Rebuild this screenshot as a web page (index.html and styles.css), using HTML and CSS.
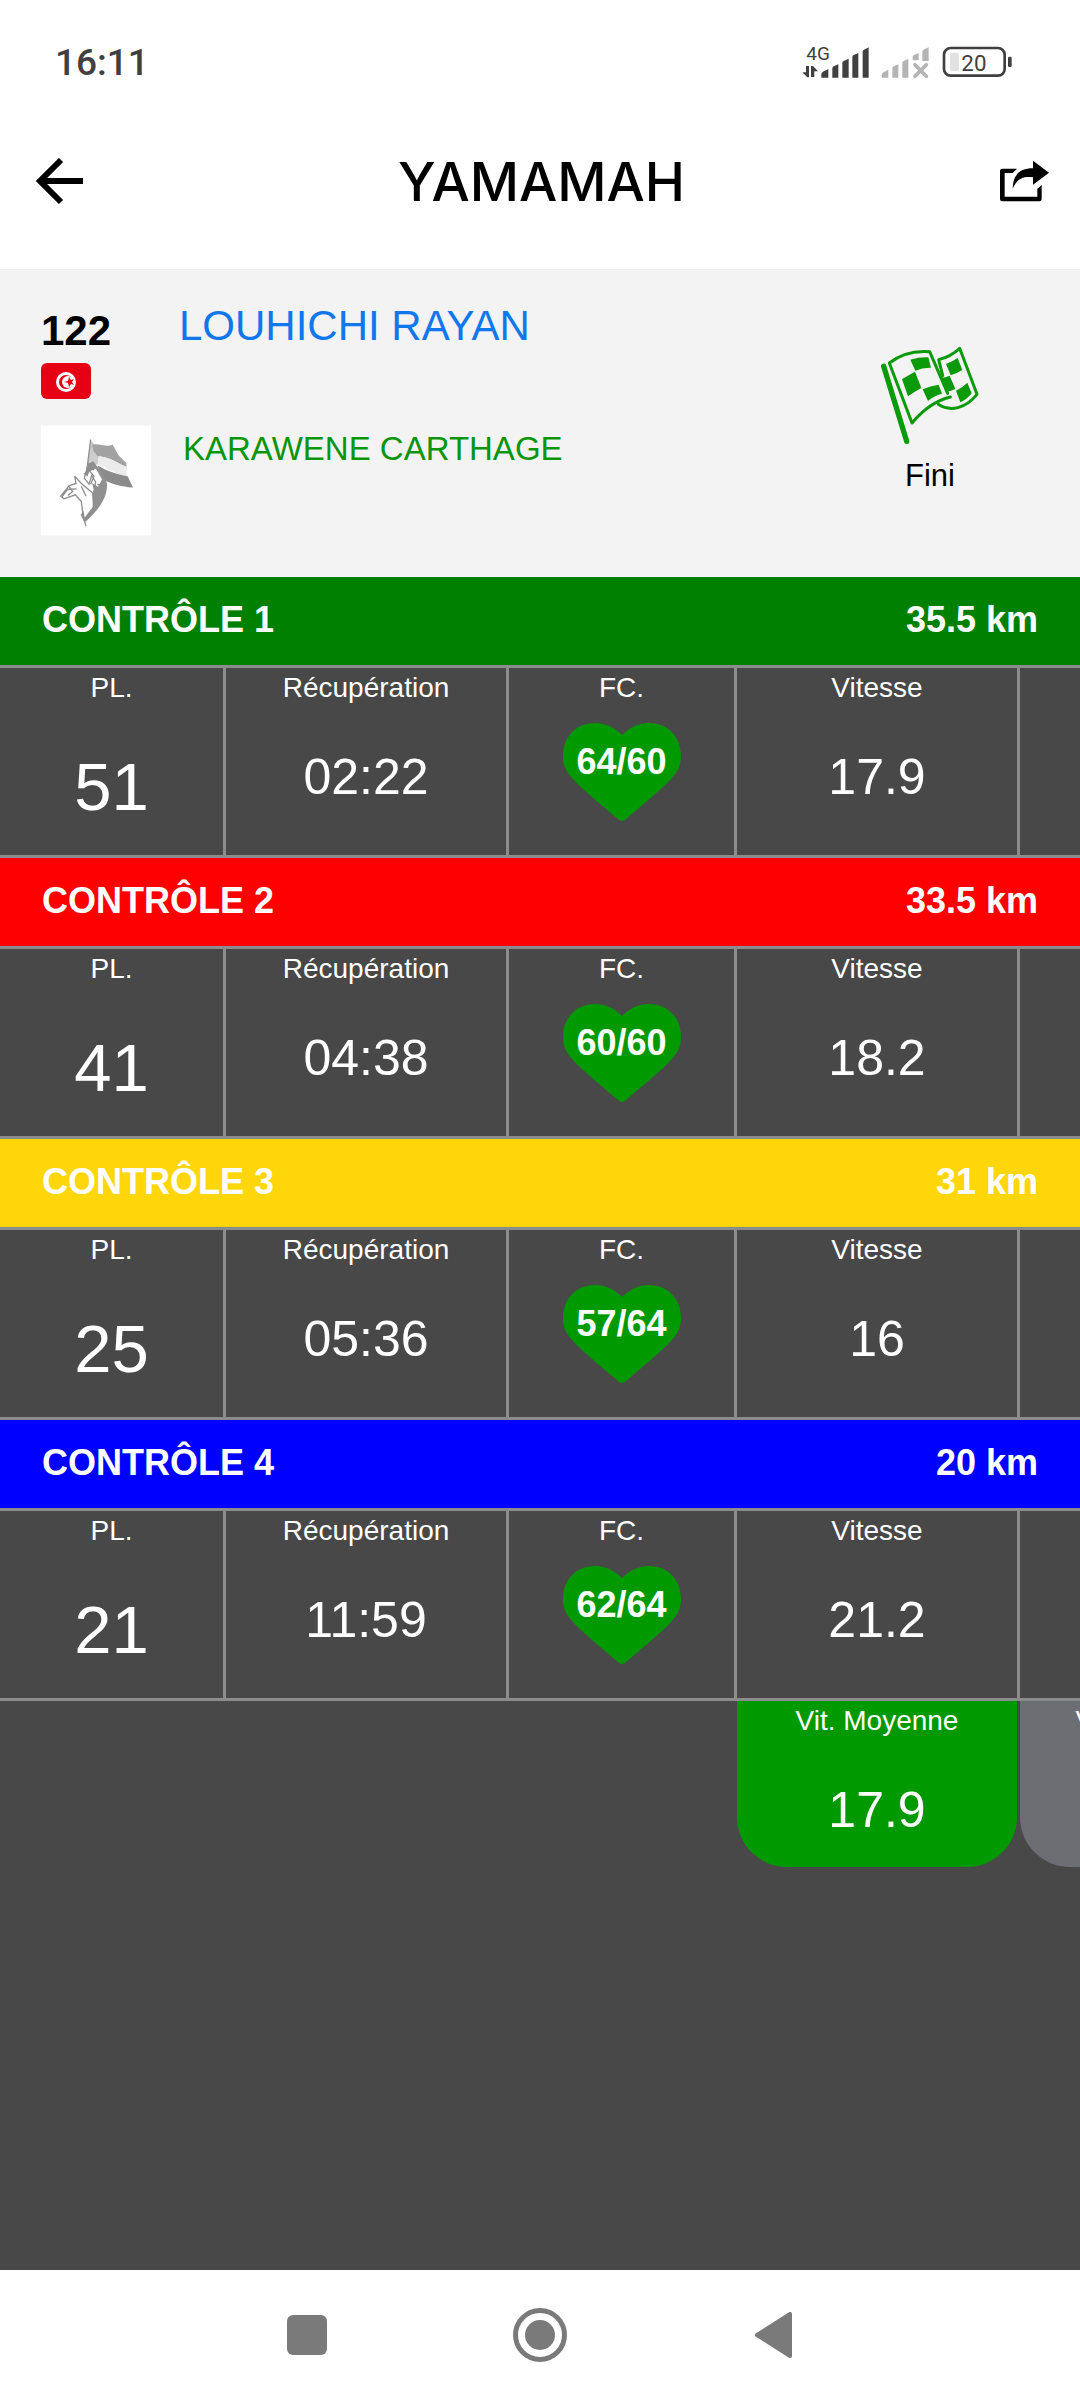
FILE: index.html
```html
<!DOCTYPE html>
<html lang="fr">
<head>
  <meta charset="UTF-8">
  <meta name="viewport" content="width=device-width, initial-scale=1.0">
  <title>YAMAMAH</title>
  <link rel="stylesheet" href="styles.css">
</head>
<body>
  <div class="status-bar">
    <span class="clock">16:11</span>
    <svg class="status-icons" viewBox="66 48 630 144">
      <g fill="#404040">
        <text x="79" y="114" font-size="57">4G</text>
        <path d="M78 132h9v34h-5l-15-15h11zM93 132h6l15 16h-11v17h-10z"/>
        <path d="M124 167v-10q0-5 5-8l16-8v26zM157 167v-28q0-4 4-6l14-6v40zM187 167v-44q0-4 4-6l15-7v57zM217 167v-62q0-4 4-6l14-6v74zM248 167v-78q0-4 4-6l14-7v91z"/>
        <rect x="492" y="78" width="182" height="83" rx="20" fill="none" stroke="#404040" stroke-width="8"/>
        <rect x="684" y="104" width="11" height="31" rx="4"/>
      </g>
      <path fill="#b4b4b4" d="M305 167v-8q0-5 5-8l15-8v24zM337 167v-28q0-4 4-6l14-6v40zM367 167v-44q0-4 4-6l14-7v57zM398 115v-10q0-4 4-6l14-6v22zM427 117v-28q0-4 4-6l15-7v41z"/>
      <path stroke="#b4b4b4" stroke-width="11" stroke-linecap="round" d="M405 128l34 35M439 128l-34 35"/>
      <rect x="510" y="92" width="27" height="55" rx="6" fill="#e2e2e2"/>
      <text x="544" y="147" font-size="67" fill="#404040">20</text>
    </svg>
  </div>

  <header class="app-bar">
    <button class="icon-button" aria-label="Retour">
      <svg width="48" height="48" viewBox="0 0 48 48" fill="none" stroke="#000" stroke-width="6">
        <path d="M25 3L4 24l21 21M4 24h43"/>
      </svg>
    </button>
    <h1>YAMAMAH</h1>
    <button class="icon-button" aria-label="Partager">
      <svg width="51" height="42" viewBox="658 418 153 126">
        <path d="M712 444h-44q-7 0-7 7v84q0 7 7 7h111q7 0 7-7v-42l-13 11v24h-98v-71h24z"/>
        <path d="M760 420l48 36-48 36v-22c-34-4-49 7-61 34 0-40 20-61 61-61z"/>
      </svg>
    </button>
  </header>

  <section class="profile">
    <div class="identity">
      <strong class="bib">122</strong>
      <svg class="country" viewBox="0 0 50 36">
        <rect width="50" height="36" rx="6" fill="#e70013"/>
        <circle cx="25" cy="19" r="10" fill="#fff"/>
        <circle cx="25" cy="19" r="7" fill="#e70013"/>
        <circle cx="27" cy="19" r="6" fill="#fff"/>
        <path fill="#e70013" d="M23 19l4-1 1-4 2 3 3-1-2 3 2 3-3-1-2 3-1-4z"/>
      </svg>
      <!-- horse and rider carrying a flag -->
      <svg class="horse" viewBox="33 228 330 330">
        <rect x="33" y="228" width="330" height="330" fill="#fff"/>
        <path fill="#ccc" d="M181 270l-10 90 32-16 4-26-16-36z"/>
        <path fill="#a2a2a2" d="M186 286c22-6 38 8 62 0l18 32 22 22 3 16c-30-16-50-34-88-36l-13-16z"/>
        <path fill="#ececec" d="M205 320c32 2 54 18 86 32l-2 28c-36-4-52-26-86-34z"/>
        <path fill="#8b8b8b" d="M203 348c30 18 56 26 90 32l16 34c-34-2-62-10-92-24z"/>
        <path fill="#909090" d="M172 344l18-9 9 13 16 16 16 38c2 44-28 82-67 117l-12-23 26-31 13-46-8-30-18-14z"/>
        <path fill="#fff" d="M178 366l20-8 18 32-12 22-22-14-12-10zM134 404l24 0 28 28 4 38-26 34-10-56-14-14z"/>
        <path fill="none" stroke="#8e8e8e" stroke-width="4" d="M182 270l-11 88-8 28 14 18 8-26 12 20-4 18M134 380l4 22-20 6-26 32 10 8 34-12 18 20 6 48 8 26M134 380l20 22 36 30M118 412l10 14-14 12M162 374l14-12 16 18-10 24M96 442l16-22 28-2M178 342l14 6-2 12-12-4zM154 410l14 30M202 404l18 8M190 432l0 50-22 24"/>
      </svg>
    </div>
    <div class="names">
      <a class="rider" href="#">LOUHICHI RAYAN</a>
      <span class="mount">KARAWENE CARTHAGE</span>
    </div>
    <div class="state">
      <svg width="98" height="98" viewBox="123 105 294 294" fill="none" stroke="#0a9a0a" stroke-width="9" stroke-linejoin="round" stroke-linecap="round">
        <path stroke-width="16" d="M131 166l69 225"/>
        <path d="M148 156c36-28 74-38 121-34l54 125M148 156l68 180c30-36 66-66 115-78"/>
        <path d="M308 194l-12-48c24-6 46-18 63-34l52 138c-34 42-80 54-116 30"/>
        <path fill="#0a9a0a" stroke="none" d="M211 146q26-8 54-7l8 31q-24-1-47 9zM186 205q18-12 39-23l19 49q-20 11-40 25zM248 235q24-10 48-14l10 27q-24 6-42 22zM318 159q19-7 35-18l14 36q-16 10-35 16zM303 200q14 0 26-6l17 40q-12 7-27 8zM348 239q18-8 34-24l13 32q-14 18-34 27z"/>
      </svg>
      <span>Fini</span>
    </div>
  </section>

  <main class="results">
    <section class="leg">
      <h2 class="leg-bar green"><span>CONTRÔLE 1</span><span>35.5 km</span></h2>
      <div class="scroller">
        <table>
          <colgroup><col class="rank"><col class="wide"><col class="heart-rate"><col class="wide"><col class="wide"></colgroup>
          <tr><th>PL.</th><th>Récupération</th><th>FC.</th><th>Vitesse</th><th></th></tr>
          <tr>
            <td class="place">51</td>
            <td>02:22</td>
            <td><div class="heart"><svg viewBox="0 0 118 98"><path d="M59 12C51 4 42 0 32 0C13 0 0 14 0 33C0 50 9 57 55 96Q59 100 63 96C109 57 118 50 118 33C118 14 105 0 86 0C76 0 67 4 59 12Z"/></svg><span>64/60</span></div></td>
            <td>17.9</td>
            <td></td>
          </tr>
        </table>
      </div>
    </section>

    <section class="leg">
      <h2 class="leg-bar red"><span>CONTRÔLE 2</span><span>33.5 km</span></h2>
      <div class="scroller">
        <table>
          <colgroup><col class="rank"><col class="wide"><col class="heart-rate"><col class="wide"><col class="wide"></colgroup>
          <tr><th>PL.</th><th>Récupération</th><th>FC.</th><th>Vitesse</th><th></th></tr>
          <tr>
            <td class="place">41</td>
            <td>04:38</td>
            <td><div class="heart"><svg viewBox="0 0 118 98"><path d="M59 12C51 4 42 0 32 0C13 0 0 14 0 33C0 50 9 57 55 96Q59 100 63 96C109 57 118 50 118 33C118 14 105 0 86 0C76 0 67 4 59 12Z"/></svg><span>60/60</span></div></td>
            <td>18.2</td>
            <td></td>
          </tr>
        </table>
      </div>
    </section>

    <section class="leg">
      <h2 class="leg-bar yellow"><span>CONTRÔLE 3</span><span>31 km</span></h2>
      <div class="scroller">
        <table>
          <colgroup><col class="rank"><col class="wide"><col class="heart-rate"><col class="wide"><col class="wide"></colgroup>
          <tr><th>PL.</th><th>Récupération</th><th>FC.</th><th>Vitesse</th><th></th></tr>
          <tr>
            <td class="place">25</td>
            <td>05:36</td>
            <td><div class="heart"><svg viewBox="0 0 118 98"><path d="M59 12C51 4 42 0 32 0C13 0 0 14 0 33C0 50 9 57 55 96Q59 100 63 96C109 57 118 50 118 33C118 14 105 0 86 0C76 0 67 4 59 12Z"/></svg><span>57/64</span></div></td>
            <td>16</td>
            <td></td>
          </tr>
        </table>
      </div>
    </section>

    <section class="leg">
      <h2 class="leg-bar blue"><span>CONTRÔLE 4</span><span>20 km</span></h2>
      <div class="scroller">
        <table>
          <colgroup><col class="rank"><col class="wide"><col class="heart-rate"><col class="wide"><col class="wide"></colgroup>
          <tr><th>PL.</th><th>Récupération</th><th>FC.</th><th>Vitesse</th><th></th></tr>
          <tr>
            <td class="place">21</td>
            <td>11:59</td>
            <td><div class="heart"><svg viewBox="0 0 118 98"><path d="M59 12C51 4 42 0 32 0C13 0 0 14 0 33C0 50 9 57 55 96Q59 100 63 96C109 57 118 50 118 33C118 14 105 0 86 0C76 0 67 4 59 12Z"/></svg><span>62/64</span></div></td>
            <td>21.2</td>
            <td></td>
          </tr>
        </table>
      </div>
    </section>

    <div class="scroller summary">
      <div class="total average">
        <span class="total-label">Vit. Moyenne</span>
        <span class="total-value">17.9</span>
      </div>
      <div class="total">
        <span class="total-label">Vit. Maximum</span>
      </div>
    </div>
  </main>

  <nav class="nav-bar">
    <button aria-label="Applications récentes">
      <svg width="40" height="40" viewBox="0 0 40 40" fill="#7a7a7a"><rect width="40" height="40" rx="6"/></svg>
    </button>
    <button aria-label="Accueil">
      <svg width="54" height="54" viewBox="0 0 54 54"><circle cx="27" cy="27" r="24.5" fill="none" stroke="#7a7a7a" stroke-width="5"/><circle cx="27" cy="27" r="15" fill="#7a7a7a"/></svg>
    </button>
    <button aria-label="Précédent">
      <svg width="38" height="46" viewBox="0 0 38 46" fill="#7a7a7a" stroke="#7a7a7a" stroke-width="4" stroke-linejoin="round"><path d="M36 2v42L3 23z"/></svg>
    </button>
  </nav>
</body>
</html>
```
FILE: styles.css
```css
* {
  box-sizing: border-box;
}
body {
  margin: 0;
  min-height: 100vh;
  display: flex;
  flex-direction: column;
  font-family: "Liberation Sans", Arial, sans-serif;
  background: #fff;
}
button {
  padding: 0;
  border: none;
  background: none;
  cursor: pointer;
}
svg {
  display: block;
}

/* status bar */
.status-bar {
  display: flex;
  align-items: center;
  justify-content: space-between;
  height: 122px;
  padding: 2px 68px 0 55px;
  font-family: Roboto, sans-serif;
}
.clock {
  font-size: 37px;
  font-weight: 500;
  color: #404040;
}
.status-icons {
  width: 210px;
  height: 48px;
}

/* title */
.app-bar {
  display: flex;
  align-items: center;
  justify-content: space-between;
  height: 148px;
  padding: 0 30px 29px 36px;
  border-bottom: 1px solid #eee;
}
h1 {
  margin: 0;
  font-family: Inter, sans-serif;
  font-size: 54px;
  font-weight: 500;
}

/* rider and horse */
.profile {
  display: flex;
  align-items: flex-start;
  padding: 41px;
  background: #f3f3f3;
}
.identity {
  width: 138px;
}
.bib {
  display: block;
  font-size: 42px;
  line-height: 40px;
}
.country {
  width: 50px;
  height: 36px;
  margin-top: 12px;
}
.horse {
  width: 110px;
  height: 111px;
  margin-top: 26px;
}
.names {
  flex: 1;
  display: flex;
  flex-direction: column;
  gap: 80px;
}
.rider {
  font-size: 42px;
  line-height: 30px;
  color: #1077ec;
  text-decoration: none;
}
.mount {
  padding-left: 4px;
  font-size: 33px;
  line-height: 56px;
  color: #0a950a;
}
.state {
  display: flex;
  flex-direction: column;
  align-items: center;
  gap: 12px;
  padding: 35px 60px 0 0;
  font-size: 31px;
  line-height: 40px;
}

/* results */
.results {
  flex: 1;
  background: #484848;
  color: #fff;
}
.leg-bar {
  display: flex;
  justify-content: space-between;
  margin: 0;
  padding: 0 42px 2px;
  font-size: 36px;
  line-height: 86px;
}
.green {
  background: #008000;
}
.red {
  background: #ff0000;
}
.yellow {
  background: #ffd60a;
}
.blue {
  background: #0000ff;
}
.scroller {
  overflow-x: auto;
  scrollbar-width: none;
}
.leg .scroller {
  border-top: 3px solid #8c8c8c;
  border-bottom: 3px solid #8c8c8c;
}
table {
  width: 1303px;
  table-layout: fixed;
  border-spacing: 0;
  text-align: center;
}
.rank {
  width: 226px;
}
.wide {
  width: 283px;
}
.heart-rate {
  width: 228px;
}
th,
td {
  padding: 0;
  border-right: 3px solid #8c8c8c;
}
th {
  height: 40px;
  font-size: 28px;
  font-weight: normal;
}
td {
  height: 147px;
  vertical-align: top;
  font-size: 50px;
  line-height: 138px;
}
td.place {
  padding-top: 10px;
  font-size: 67px;
  line-height: 137px;
}
.heart {
  display: grid;
  justify-content: center;
  padding-top: 15px;
  font-size: 36px;
  font-weight: bold;
  line-height: 78px;
}
.heart svg,
.heart span {
  grid-area: 1 / 1;
}
.heart svg {
  width: 118px;
  height: 98px;
  fill: #009a00;
}

/* averages */
.summary {
  display: flex;
  gap: 3px;
  padding-left: 737px;
}
.total {
  flex: none;
  width: 280px;
  height: 166px;
  border-radius: 0 0 50px 50px;
  background: #6d6e73;
  text-align: center;
}
.average {
  background: #009a00;
}
.total-label,
.total-value {
  display: block;
}
.total-label {
  font-size: 28px;
  line-height: 40px;
}
.total-value {
  font-size: 50px;
  line-height: 138px;
}

/* system navigation */
.nav-bar {
  display: flex;
  justify-content: center;
  height: 130px;
}
.nav-bar button {
  width: 233px;
  display: flex;
  align-items: center;
  justify-content: center;
}
```
